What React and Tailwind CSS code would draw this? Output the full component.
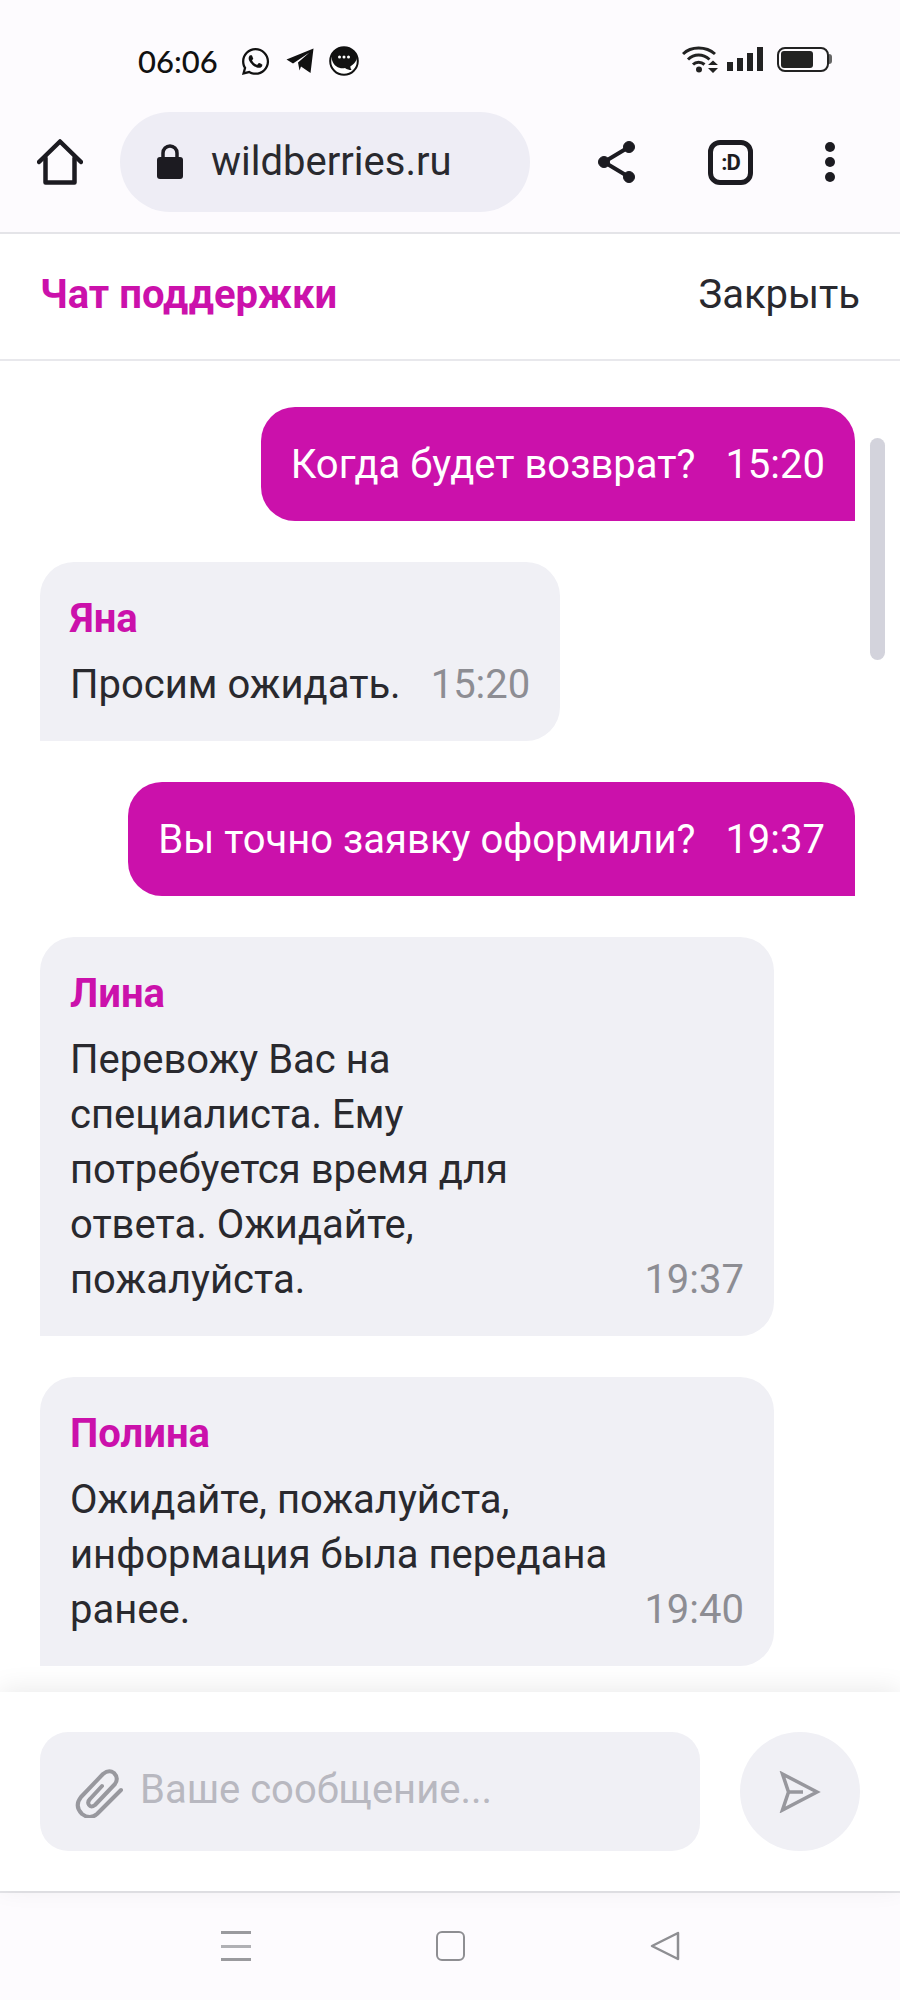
import React from 'react';
import { FaWhatsapp } from 'react-icons/fa';

const messages = [
  { id: 1, mine: true, text: 'Когда будет возврат?', time: '15:20' },
  { id: 2, author: 'Яна', text: 'Просим ожидать.', time: '15:20' },
  { id: 3, mine: true, text: 'Вы точно заявку оформили?', time: '19:37' },
  {
    id: 4,
    author: 'Лина',
    lines: ['Перевожу Вас на', 'специалиста. Ему', 'потребуется время для', 'ответа. Ожидайте,', 'пожалуйста.'],
    time: '19:37',
  },
  {
    id: 5,
    author: 'Полина',
    lines: ['Ожидайте, пожалуйста,', 'информация была передана', 'ранее.'],
    time: '19:40',
  },
];

const TelegramIcon = () => (
  <svg width="28" height="26" viewBox="0 0 28 26" fill="#111">
    <path d="M0.500 11.500 27.500 0.500 24.500 25 15 18.500 13.500 22.500 12 14.500 23.500 4.500 7 15.500Z" />
  </svg>
);

const ChatBadgeIcon = () => (
  <svg width="30" height="30" viewBox="0 0 30 30">
    <circle cx="15" cy="15" r="13.800" fill="#fff" stroke="#111" strokeWidth="2" />
    <path d="M15 1C7 1 1.500 6 3 14 5 21 11 23 16 22c2 1.500 4 2 6.500 2-.8-1-1.200-2.300-1.200-3.500C25 18 28 15 28 11 26 5 21 1 15 1Z" fill="#111" />
    <circle cx="10.500" cy="11" r="1.500" fill="#fff" />
    <circle cx="15" cy="11" r="1.500" fill="#fff" />
    <circle cx="19.500" cy="11" r="1.500" fill="#fff" />
  </svg>
);

const WifiIcon = () => (
  <svg width="36" height="28" viewBox="0 0 36 28" fill="none" stroke="#222">
    <path d="M1 9C9 1 24 1 33 9" strokeWidth="3" />
    <path d="M6 14.500C12 8.500 21 8.500 27.500 14.500" strokeWidth="3" />
    <path d="M11 19.500C14 16.500 19 16.500 22.500 19.500" strokeWidth="3" />
    <circle cx="17" cy="24.500" r="3" fill="#222" stroke="none" />
    <path d="M26 20 31 15.500 36 20ZM26 23 31 28 36 23Z" fill="#222" stroke="none" />
  </svg>
);

const SignalIcon = () => (
  <div className="flex h-[24px] items-end gap-[4px]">
    <div className="h-[9px] w-[6px] bg-[#222]" />
    <div className="h-[13px] w-[6px] bg-[#222]" />
    <div className="h-[18px] w-[6px] bg-[#222]" />
    <div className="h-[24px] w-[6px] bg-[#222]" />
  </div>
);

const BatteryIcon = () => (
  <div className="flex items-center">
    <div className="h-[25px] w-[52px] rounded-[8px] border-2 border-[#222] p-[2px]">
      <div className="h-full w-[32px] rounded-[3px] bg-[#222]" />
    </div>
    <div className="h-[10px] w-[3px] rounded-r-sm bg-[#666]" />
  </div>
);

const HomeIcon = () => (
  <svg width="46" height="46" viewBox="0 0 46 46" fill="none" stroke="#1c1b21" strokeWidth="4.500" strokeLinejoin="round" strokeLinecap="round">
    <path d="M2 23 23 2.500 44 23" />
    <path d="M8.500 19V43.500H37.500V19" />
  </svg>
);

const LockIcon = () => (
  <svg width="28" height="36" viewBox="0 0 28 36" fill="#1c1b21">
    <path d="M7 15V9a7 7 0 0 1 14 0v6" fill="none" stroke="#1c1b21" strokeWidth="3.500" />
    <rect x="1" y="13" width="26" height="22" rx="3" />
  </svg>
);

const ShareIcon = () => (
  <svg width="40" height="44" viewBox="0 0 40 44" fill="#1c1b21" stroke="#1c1b21">
    <path d="M32 7 7 22 32 37" fill="none" strokeWidth="4" />
    <circle cx="32" cy="7" r="5.500" />
    <circle cx="7" cy="22" r="5.500" />
    <circle cx="32" cy="37" r="5.500" />
  </svg>
);

const AttachIcon = () => (
  <svg width="52" height="52" viewBox="0 0 52 52" fill="none" stroke="#98989e" strokeWidth="4" strokeLinecap="round" strokeLinejoin="round">
    <path d="M48 24 24 48Q17 54 9 48 1 40 8 31L30 8Q36 3 41 7 46 12 42 18L22 39Q18 42 16 39 14 36 17 33L29 20" />
  </svg>
);

const SendIcon = () => (
  <svg width="42" height="42" viewBox="0 0 42 42" fill="none" stroke="#97979d" strokeWidth="3.500" strokeLinejoin="miter">
    <path d="M3.500 3 38 21 3.500 39 9.500 21Z" />
    <path d="M9.500 21H24" />
  </svg>
);

const MineBubble = ({ text, time }) => (
  <div className="flex h-[114px] items-center gap-[30px] self-end rounded-[34px] rounded-br-none bg-[#cb11ab] pl-[30px] pr-[30px] pt-[2px] text-[40px] text-white">
    <span>{text}</span>
    <span>{time}</span>
  </div>
);

const SupportBubble = ({ author, text, lines, time }) => (
  <div className={`self-start rounded-[34px] rounded-bl-none bg-[#f0f0f5] pb-[29px] pl-[30px] pr-[30px] pt-[33px] ${lines ? 'w-[734px]' : ''}`}>
    <div className="mb-[14px] text-[40px] font-bold leading-[48px] text-[#cb11ab]">{author}</div>
    {lines ? (
      <div className="flex items-end justify-between text-[40px] leading-[55px] text-[#29292e]">
        <div>
          {lines.map((line) => (
            <div key={line}>{line}</div>
          ))}
        </div>
        <span className="text-[#8d8d93]">{time}</span>
      </div>
    ) : (
      <div className="flex gap-[30px] text-[40px] leading-[55px] text-[#29292e]">
        <span>{text}</span>
        <span className="text-[#8d8d93]">{time}</span>
      </div>
    )}
  </div>
);

export default function App() {
  return (
    <div className="flex h-[2000px] w-[900px] flex-col overflow-hidden bg-white font-['Roboto',sans-serif]">
      <div className="h-[234px] shrink-0 border-b-2 border-[#e4e4e8] bg-[#fdfbfe]">
        <div className="flex h-[112px] items-start justify-between pl-[138px] pr-[68px] pt-[45px]">
          <div className="flex items-center gap-[22px]">
            <span className="font-['Lato',sans-serif] text-[31px] font-medium leading-[32px] text-[#111]">06:06</span>
            <div className="flex items-center gap-[15px]">
              <FaWhatsapp size={31} color="#111" />
              <TelegramIcon />
              <ChatBadgeIcon />
            </div>
          </div>
          <div className="flex items-center gap-[9px]">
            <WifiIcon />
            <SignalIcon />
            <div className="ml-[5px]"><BatteryIcon /></div>
          </div>
        </div>
        <div className="flex items-center pl-[37px]">
          <HomeIcon />
          <div className="ml-[37px] flex h-[100px] w-[410px] items-center rounded-full bg-[#eeedf5] pl-[36px]">
            <LockIcon />
            <span className="ml-[27px] text-[40px] text-[#29292e]">wildberries.ru</span>
          </div>
          <div className="ml-[67px]"><ShareIcon /></div>
          <div className="ml-[71px] flex h-[45px] w-[45px] items-center justify-center rounded-[12px] border-[5px] border-[#1c1b21] text-[22px] font-bold tracking-tighter text-[#1c1b21]">:D</div>
          <div className="ml-[72px] flex flex-col gap-[5px]">
            <div className="h-[10px] w-[10px] rounded-full bg-[#1c1b21]" />
            <div className="h-[10px] w-[10px] rounded-full bg-[#1c1b21]" />
            <div className="h-[10px] w-[10px] rounded-full bg-[#1c1b21]" />
          </div>
        </div>
      </div>

      <div className="flex h-[127px] shrink-0 items-center justify-between border-b-2 border-[#e8e8ec] pb-[3px] pl-[40px] pr-[40px]">
        <span className="text-[40px] font-bold text-[#cb11ab]">Чат поддержки</span>
        <span className="text-[40px] text-[#29292e]">Закрыть</span>
      </div>

      <div className="relative flex-1 overflow-hidden">
        <div className="flex flex-col gap-[41px] pl-[40px] pr-[45px] pt-[46px]">
          {messages.map((m) =>
            m.mine ? <MineBubble key={m.id} {...m} /> : <SupportBubble key={m.id} {...m} />
          )}
        </div>
        <div className="absolute left-[870px] top-[77px] h-[222px] w-[15px] rounded-full bg-[#d3d3dc]" />
      </div>

      <div className="relative flex h-[199px] shrink-0 items-start gap-[40px] bg-white pl-[40px] pt-[40px] shadow-[0_-4px_24px_rgba(0,0,0,0.08)]">
        <div className="flex h-[119px] w-[660px] items-center rounded-[28px] bg-[#f0f0f5] pl-[33px]">
          <AttachIcon />
          <span className="mb-[3px] ml-[15px] text-[40px] text-[#b8b8c0]">Ваше сообщение...</span>
        </div>
        <div className="flex h-[119px] w-[120px] items-center justify-center rounded-full bg-[#f0f0f5]">
          <SendIcon />
        </div>
      </div>

      <div className="flex h-[109px] shrink-0 items-start justify-center gap-[185px] border-t-2 border-[#e4e4e8] bg-[#fdfbfe] pt-[38px]">
        <div className="flex h-[30px] w-[30px] flex-col justify-between">
          <div className="h-[3px] bg-[#9a9a9e]" />
          <div className="h-[3px] bg-[#b0b0b4]" />
          <div className="h-[3px] bg-[#9a9a9e]" />
        </div>
        <div className="h-[30px] w-[29px] rounded-[6px] border-2 border-[#8e8e92]" />
        <svg width="30" height="30" viewBox="0 0 30 30" fill="none" stroke="#8e8e92" strokeWidth="2.500" strokeLinejoin="round">
          <path d="M28 2 2 15 28 28Z" />
        </svg>
      </div>
    </div>
  );
}
